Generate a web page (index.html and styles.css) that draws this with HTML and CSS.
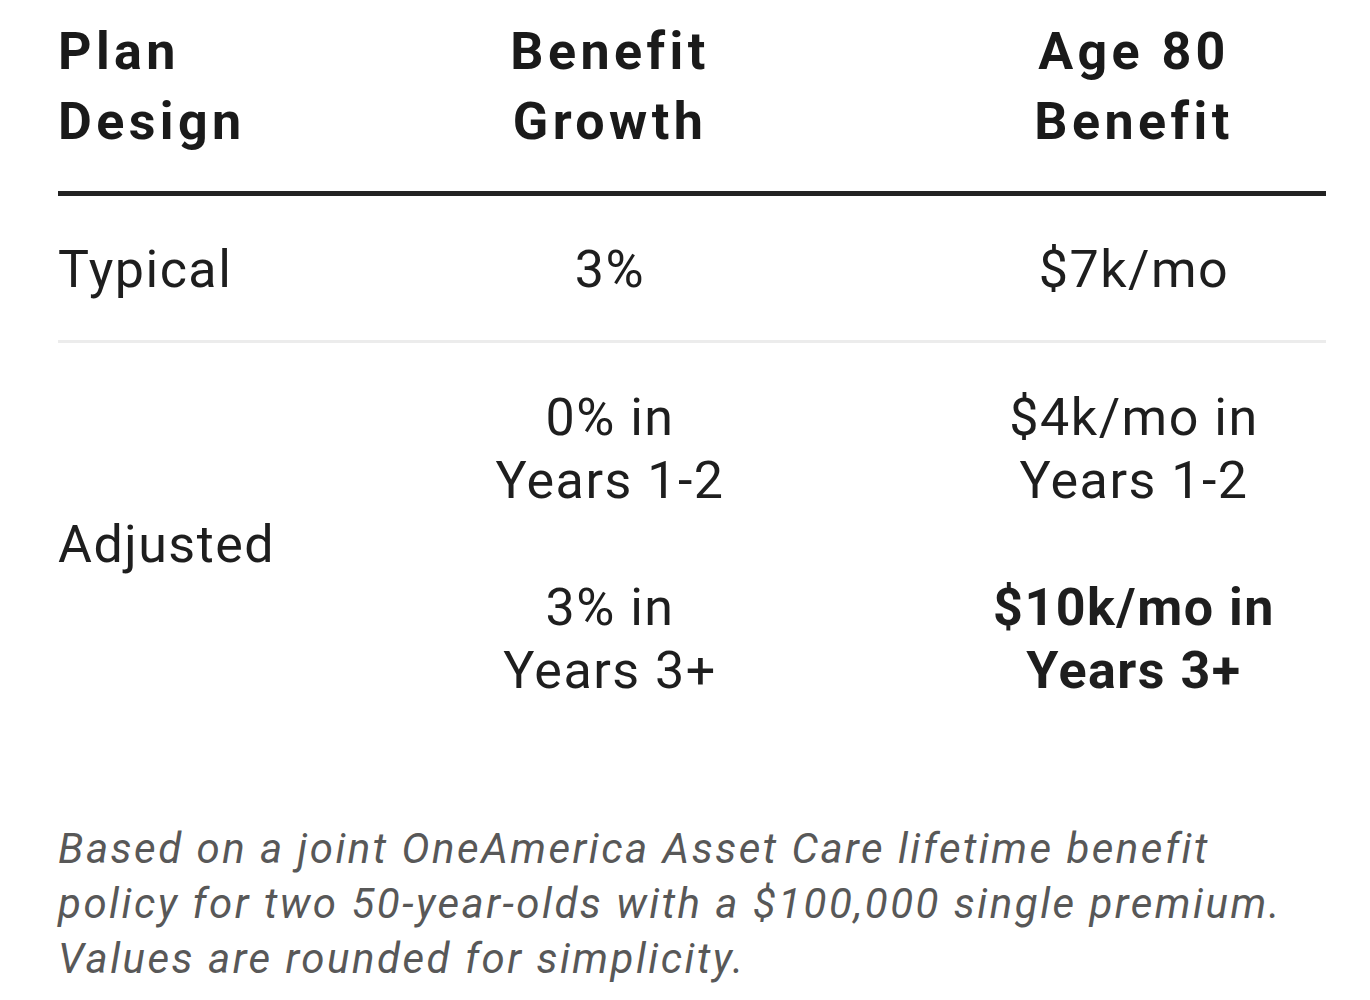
FILE: index.html
```html
<!DOCTYPE html>
<html>
<head>
<meta charset="utf-8">
<link rel="stylesheet" href="styles.css">
</head>
<body>
<div class="wrap">
  <div class="table">
    <div class="row head">
      <div class="cell c1">Plan<br>Design</div>
      <div class="cell c2">Benefit<br>Growth</div>
      <div class="cell c3">Age 80<br>Benefit</div>
    </div>
    <div class="row typical">
      <div class="cell c1">Typical</div>
      <div class="cell c2">3%</div>
      <div class="cell c3">$7k/mo</div>
    </div>
    <div class="row adjusted">
      <div class="cell c1">Adjusted</div>
      <div class="cell c2">
        <p>0% in<br>Years 1-2</p>
        <p>3% in<br>Years 3+</p>
      </div>
      <div class="cell c3">
        <p>$4k/mo in<br>Years 1-2</p>
        <p class="bold">$10k/mo in<br>Years 3+</p>
      </div>
    </div>
  </div>
  <p class="note">Based on a joint OneAmerica Asset Care lifetime benefit policy for two 50-year-olds with a $100,000 single premium. Values are rounded for simplicity.</p>
</div>
</body>
</html>
```
FILE: styles.css
```css
html, body {
  margin: 0;
  padding: 0;
  background: #fff;
}
body {
  font-family: Roboto, "Liberation Sans", sans-serif;
  color: #1e1e1e;
}
.wrap {
  margin-left: 58px;
  width: 1268px;
  padding-top: 17px;
}
.row {
  display: grid;
  grid-template-columns: 220px 664px 384px;
  align-items: center;
}
.cell {
  font-size: 52px;
  line-height: 63px;
  letter-spacing: 1.5px;
}
.c2, .c3 {
  text-align: center;
}
.head {
  align-items: start;
  padding-bottom: 34px;
  border-bottom: 5px solid #222;
}
.head .cell {
  font-weight: 700;
  line-height: 70px;
  letter-spacing: 4.4px;
  color: #1a1a1a;
}
.typical {
  padding: 42px 0 39px;
  border-bottom: 3px solid #ececec;
}
.adjusted {
  padding: 43px 0 43px;
}
.adjusted p {
  margin: 0;
}
.adjusted p + p {
  margin-top: 64px;
}
.bold {
  font-weight: 700;
}
.note {
  margin: 76px 0 0;
  font-size: 42px;
  line-height: 55px;
  font-style: italic;
  font-weight: 400;
  letter-spacing: 2.5px;
  color: #585858;
}
```
